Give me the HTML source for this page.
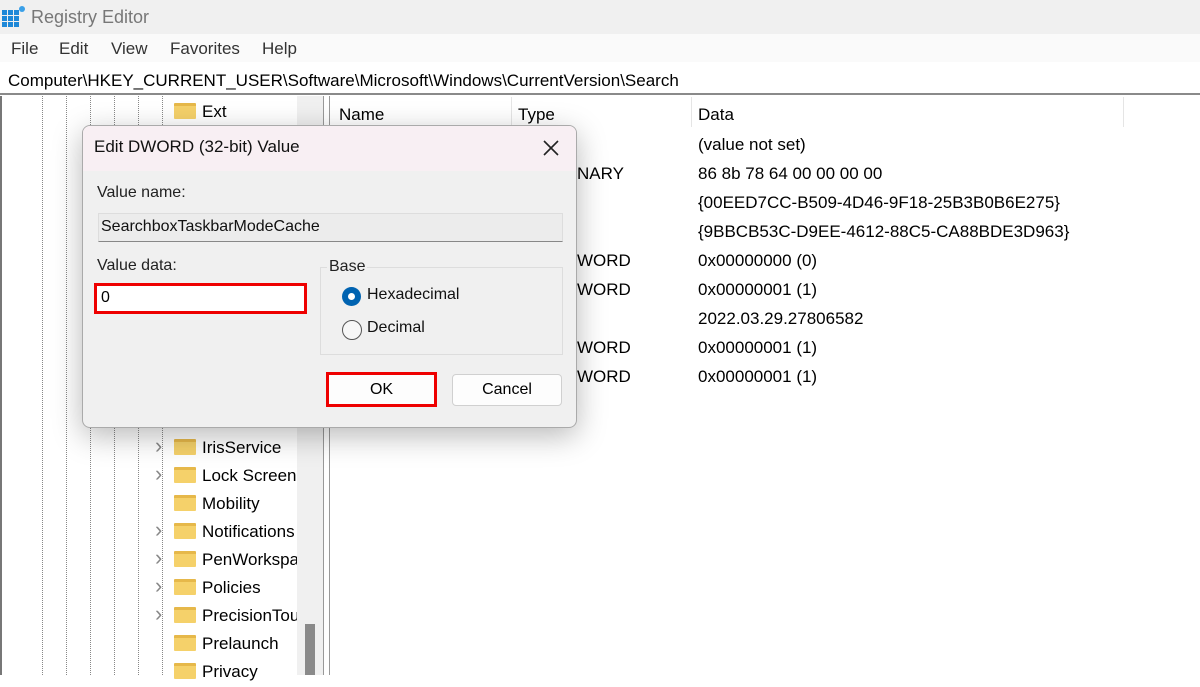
<!DOCTYPE html>
<html><head><meta charset="utf-8"><style>
*{margin:0;padding:0;box-sizing:border-box}
body{width:1200px;height:675px;overflow:hidden;background:#fff;font-family:"Segoe UI","Liberation Sans",sans-serif;position:relative;color:#000}
.abs{position:absolute;white-space:nowrap}
#title{left:0;top:0;width:1200px;height:34px;background:#f0f0f0}
#menu{left:0;top:34px;width:1200px;height:28px;background:#fafafa;font-size:17px;color:#333}
#addr{left:0;top:64px;width:1200px;height:31px;background:#fff;border-bottom:2px solid #8a8a8a;font-size:17px;line-height:34px;padding-left:8px}
.dl{position:absolute;top:96px;height:579px;border-left:1px dotted #888}
.ti{position:absolute;font-size:17px;height:28px;line-height:30px}
.fold{position:absolute;width:22px;height:16px;background:#f5d16a;border-top:3px solid #e6b84a;border-radius:1px}
.chev{position:absolute;font-size:22px;color:#888;line-height:22px}
.row{position:absolute;font-size:17px;line-height:31px}
</style></head><body>
<div id="title" class="abs">
 <svg style="position:absolute;left:2px;top:6px" width="24" height="22" viewBox="0 0 24 22"><g fill="#1e88d8"><rect x="0" y="4" width="5" height="5"/><rect x="6" y="4" width="5" height="5"/><rect x="12" y="4" width="5" height="5"/><rect x="0" y="10" width="5" height="5"/><rect x="6" y="10" width="5" height="5"/><rect x="12" y="10" width="5" height="5"/><rect x="0" y="16" width="5" height="5"/><rect x="6" y="16" width="5" height="5"/><rect x="12" y="16" width="5" height="5"/></g><circle cx="20" cy="3" r="3" fill="#3aa0e8"/></svg>
 <span class="abs" style="left:31px;top:7px;font-size:18px;color:#777">Registry Editor</span>
</div>
<div id="menu" class="abs">
 <span class="abs" style="left:11px;top:5px">File</span>
 <span class="abs" style="left:59px;top:5px">Edit</span>
 <span class="abs" style="left:111px;top:5px">View</span>
 <span class="abs" style="left:170px;top:5px">Favorites</span>
 <span class="abs" style="left:262px;top:5px">Help</span>
</div>
<div id="addr" class="abs">Computer\HKEY_CURRENT_USER\Software\Microsoft\Windows\CurrentVersion\Search</div>
<div class="abs" style="left:0;top:96px;width:2px;height:579px;background:#777"></div>
<div class="dl" style="left:42px"></div><div class="dl" style="left:66px"></div><div class="dl" style="left:90px"></div><div class="dl" style="left:114px"></div><div class="dl" style="left:138px"></div><div class="dl" style="left:162px"></div>
<div class="abs" style="left:297px;top:96px;width:26px;height:579px;background:#f0f0f0"></div>
<div class="abs" style="left:305px;top:624px;width:10px;height:51px;background:#8a8a8a"></div>
<div class="abs" style="left:323px;top:96px;width:1px;height:579px;background:#999"></div>
<div class="abs" style="left:329px;top:96px;width:1px;height:579px;background:#999"></div>
<div class="abs" style="left:330px;top:96px;width:870px;height:579px;background:#fff"></div>

<!-- tree -->
<div class="fold" style="left:174px;top:103px"></div><span class="ti" style="left:202px;top:97px">Ext</span>
<div class="fold" style="left:174px;top:439px"></div><span class="chev" style="left:155px;top:435px">›</span><span class="ti" style="left:202px;top:433px">IrisService</span>
<div class="fold" style="left:174px;top:467px"></div><span class="chev" style="left:155px;top:463px">›</span><span class="ti" style="left:202px;top:461px;width:95px;overflow:hidden">Lock Screen</span>
<div class="fold" style="left:174px;top:495px"></div><span class="ti" style="left:202px;top:489px">Mobility</span>
<div class="fold" style="left:174px;top:523px"></div><span class="chev" style="left:155px;top:519px">›</span><span class="ti" style="left:202px;top:517px;width:95px;overflow:hidden">Notifications</span>
<div class="fold" style="left:174px;top:551px"></div><span class="chev" style="left:155px;top:547px">›</span><span class="ti" style="left:202px;top:545px;width:95px;overflow:hidden">PenWorkspace</span>
<div class="fold" style="left:174px;top:579px"></div><span class="chev" style="left:155px;top:575px">›</span><span class="ti" style="left:202px;top:573px">Policies</span>
<div class="fold" style="left:174px;top:607px"></div><span class="chev" style="left:155px;top:603px">›</span><span class="ti" style="left:202px;top:601px;width:95px;overflow:hidden">PrecisionTouch</span>
<div class="fold" style="left:174px;top:635px"></div><span class="ti" style="left:202px;top:629px">Prelaunch</span>
<div class="fold" style="left:174px;top:663px"></div><span class="ti" style="left:202px;top:657px">Privacy</span>

<!-- list -->
<span class="row abs" style="left:339px;top:99px">Name</span>
<div class="abs" style="left:511px;top:97px;width:1px;height:30px;background:#e5e5e5"></div>
<span class="row abs" style="left:518px;top:99px">Type</span>
<div class="abs" style="left:691px;top:97px;width:1px;height:30px;background:#e5e5e5"></div>
<span class="row abs" style="left:698px;top:99px">Data</span>
<div class="abs" style="left:1123px;top:97px;width:1px;height:30px;background:#e5e5e5"></div>
<span class="row abs" style="left:698px;top:129px">(value not set)</span>
<span class="row abs" style="left:577px;top:158px">NARY</span><span class="row abs" style="left:698px;top:158px">86 8b 78 64 00 00 00 00</span>
<span class="row abs" style="left:698px;top:187px">{00EED7CC-B509-4D46-9F18-25B3B0B6E275}</span>
<span class="row abs" style="left:698px;top:216px">{9BBCB53C-D9EE-4612-88C5-CA88BDE3D963}</span>
<span class="row abs" style="left:577px;top:245px">WORD</span><span class="row abs" style="left:698px;top:245px">0x00000000 (0)</span>
<span class="row abs" style="left:577px;top:274px">WORD</span><span class="row abs" style="left:698px;top:274px">0x00000001 (1)</span>
<span class="row abs" style="left:698px;top:303px">2022.03.29.27806582</span>
<span class="row abs" style="left:577px;top:332px">WORD</span><span class="row abs" style="left:698px;top:332px">0x00000001 (1)</span>
<span class="row abs" style="left:577px;top:361px">WORD</span><span class="row abs" style="left:698px;top:361px">0x00000001 (1)</span>

<!-- dialog -->
<div class="abs" style="left:82px;top:125px;width:495px;height:303px;background:#f0f0f0;border:1px solid #aaa;border-radius:8px;box-shadow:0 8px 30px rgba(0,0,0,.28);overflow:hidden">
 <div class="abs" style="left:0;top:0;width:495px;height:45px;background:#f8eff3"></div>
 <span class="abs" style="left:11px;top:11px;font-size:17px;color:#111">Edit DWORD (32-bit) Value</span>
 <svg class="abs" style="left:459px;top:13px" width="18" height="18" viewBox="0 0 18 18"><path d="M2 2L16 16M16 2L2 16" stroke="#222" stroke-width="1.6"/></svg>
 <span class="abs" style="left:14px;top:58px;font-size:16px;color:#222">Value name:</span>
 <div class="abs" style="left:15px;top:87px;width:465px;height:29px;background:#ececec;border:1px solid #ddd;border-bottom:1px solid #888;font-size:16px;line-height:26px;padding-left:2px;color:#111">SearchboxTaskbarModeCache</div>
 <span class="abs" style="left:14px;top:131px;font-size:16px;color:#222">Value data:</span>
 <div class="abs" style="left:11px;top:157px;width:213px;height:31px;background:#fff;border:3px solid #e00;font-size:16px;line-height:24px;padding-left:4px">0</div>
 <div class="abs" style="left:237px;top:141px;width:243px;height:88px;border:1px solid #ddd"></div>
 <span class="abs" style="left:244px;top:132px;font-size:16px;background:#f0f0f0;padding:0 2px;color:#222">Base</span>
 <div class="abs" style="left:259px;top:161px;width:19px;height:19px;border-radius:50%;background:#0063b1"><div class="abs" style="left:6px;top:6px;width:7px;height:7px;border-radius:50%;background:#fff"></div></div>
 <span class="abs" style="left:284px;top:160px;font-size:16px;color:#111">Hexadecimal</span>
 <div class="abs" style="left:259px;top:194px;width:20px;height:20px;border-radius:50%;border:1px solid #555;background:#f7f7f7"></div>
 <span class="abs" style="left:284px;top:193px;font-size:16px;color:#111">Decimal</span>
 <div class="abs" style="left:243px;top:246px;width:111px;height:35px;background:#fdfdfd;border:3px solid #e00;font-size:16px;text-align:center;line-height:29px">OK</div>
 <div class="abs" style="left:369px;top:248px;width:110px;height:32px;background:#fdfdfd;border:1px solid #d0d0d0;border-radius:4px;font-size:16px;text-align:center;line-height:30px">Cancel</div>
</div>
</body></html>
